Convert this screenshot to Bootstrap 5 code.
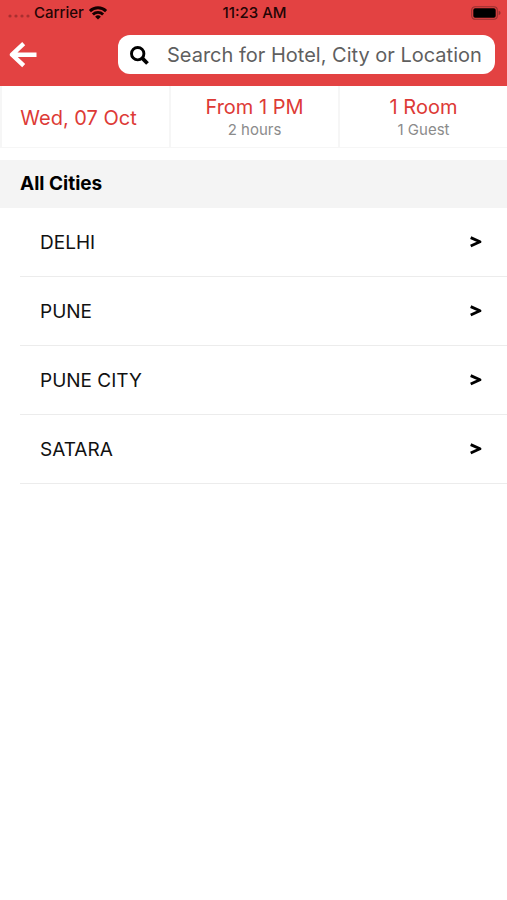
<!DOCTYPE html>
<html lang="en">
<head>
<meta charset="utf-8">
<meta name="viewport" content="width=device-width, initial-scale=1">
<title>All Cities</title>
<link href="https://cdn.jsdelivr.net/npm/bootstrap@5.3.0/dist/css/bootstrap.min.css" rel="stylesheet">
<style>
  body { font-family: Inter, "Liberation Sans", sans-serif; color: #000; background: #fff; }
  svg { display: block; flex: none; }
  .app-top { background: #e34242; height: 86px; }
  .status { height: 26px; font-size: 15px; font-weight: 500; line-height: 26px; padding: 0 6px 0 8px; color: #240505; }
  .status > * { flex: 1 1 0; }
  .back { margin-left: 9px; }
  .search-box { height: 39px; margin: 9px 12px 0 81px; padding: 0 12px; border-radius: 12px; background: #fff; gap: 18px; }
  .search-box input { font-size: 20px; line-height: 24px; color: #000; outline: 0; min-width: 0; }
  .search-box input::placeholder { color: #5f5f5f; opacity: 1; }
  .filter { height: 62px; border: 1px solid #f6f6f6; border-width: 0 0 1px 2px; background: #fff; color: #dd3a36; font-size: 20px; line-height: 24px; padding: 2px 0 0; }
  .filter:first-child { padding-right: 14px; }
  .filter small { font-size: 15px; line-height: 22px; color: #8b8b8b; }
  .heading { margin: 12px 0 0; height: 48px; padding: 0 20px; background: #f4f4f4; font-size: 19px; font-weight: 700; line-height: 48px; }
  .cities { padding-left: 20px; }
  .city { height: 69px; padding: 2px 25px 0 20px; border-bottom: 1px solid #ececec; color: #111; font-size: 19px; line-height: 24px; }
</style>
<script src="https://cdn.jsdelivr.net/npm/bootstrap@5.3.0/dist/js/bootstrap.bundle.min.js" defer></script>
</head>
<body>
<header class="app-top">
  <div class="status d-flex align-items-center">
    <div class="d-flex align-items-center">
      <svg width="22" height="14" viewBox="0 0 22 14" fill="#a92f2f"><circle cx="2" cy="10" r="1.6"/><circle cx="8" cy="10" r="1.6"/><circle cx="14" cy="10" r="1.6"/><circle cx="20" cy="10" r="1.6"/></svg>
      <span class="ms-1">Carrier</span>
      <svg class="ms-1" width="20" height="14" viewBox="-1 0 20 14" fill="none" stroke="#150000" stroke-width="2.9"><path d="M.9 5.1a11.6 11.6 0 0 1 16.2 0M3.9 8.5a7.3 7.3 0 0 1 10.2 0"/><path d="M9 13.6 6.1 10.7a4.2 4.2 0 0 1 5.8 0Z" fill="#150000" stroke="none"/></svg>
    </div>
    <div class="text-center">11:23 AM</div>
    <div class="d-flex justify-content-end">
      <svg width="30" height="14" viewBox="0 0 30 14"><rect x=".7" y=".7" width="25.6" height="12.6" rx="3.5" fill="none" stroke="#963030" stroke-width="1.1"/><rect x="2.3" y="2.3" width="22.4" height="9.4" rx="1.8"/><path d="M27.6 4.8q2 .6 2 2.2t-2 2.2Z" fill="#963030"/></svg>
    </div>
  </div>
  <div class="d-flex align-items-start">
    <button class="back btn p-0 border-0 mt-3" type="button" aria-label="Back">
      <svg width="28" height="26" viewBox="0 0 28 26" fill="none" stroke="#fff" stroke-width="4.4" stroke-linejoin="round"><path d="M14.7 1.7 3 12.7l11.7 11M3.5 12.7H27.5"/></svg>
    </button>
    <label class="search-box d-flex align-items-center flex-fill">
      <svg width="19" height="20" viewBox="0 -1 19 20" fill="none" stroke="#000"><circle cx="7.7" cy="7.7" r="6.2" stroke-width="2.9"/><path d="m12.2 12.2 5.3 5.3" stroke-width="3.8"/></svg>
      <input class="border-0 p-0 flex-fill bg-transparent" type="text" aria-label="Search" placeholder="Search for Hotel, City or Location">
    </label>
  </div>
</header>
<main>
  <div class="row g-0">
    <button class="filter col-4" type="button">Wed, 07 Oct</button>
    <button class="filter col-4" type="button">From 1 PM<small class="d-block">2 hours</small></button>
    <button class="filter col-4" type="button">1 Room<small class="d-block">1 Guest</small></button>
  </div>
  <h1 class="heading">All Cities</h1>
  <nav class="cities" aria-label="Cities">
    <a class="city d-flex align-items-center justify-content-between text-decoration-none" href="#delhi">DELHI
      <svg width="12" height="14" viewBox="0 0 12 14" fill="none" stroke="#000" stroke-width="2.8"><path d="M.7 1.6 10 5.8.7 10" stroke-linejoin="round"/></svg></a>
    <a class="city d-flex align-items-center justify-content-between text-decoration-none" href="#pune">PUNE
      <svg width="12" height="14" viewBox="0 0 12 14" fill="none" stroke="#000" stroke-width="2.8"><path d="M.7 1.6 10 5.8.7 10" stroke-linejoin="round"/></svg></a>
    <a class="city d-flex align-items-center justify-content-between text-decoration-none" href="#pune-city">PUNE CITY
      <svg width="12" height="14" viewBox="0 0 12 14" fill="none" stroke="#000" stroke-width="2.8"><path d="M.7 1.6 10 5.8.7 10" stroke-linejoin="round"/></svg></a>
    <a class="city d-flex align-items-center justify-content-between text-decoration-none" href="#satara">SATARA
      <svg width="12" height="14" viewBox="0 0 12 14" fill="none" stroke="#000" stroke-width="2.8"><path d="M.7 1.6 10 5.8.7 10" stroke-linejoin="round"/></svg></a>
  </nav>
</main>
</body>
</html>
